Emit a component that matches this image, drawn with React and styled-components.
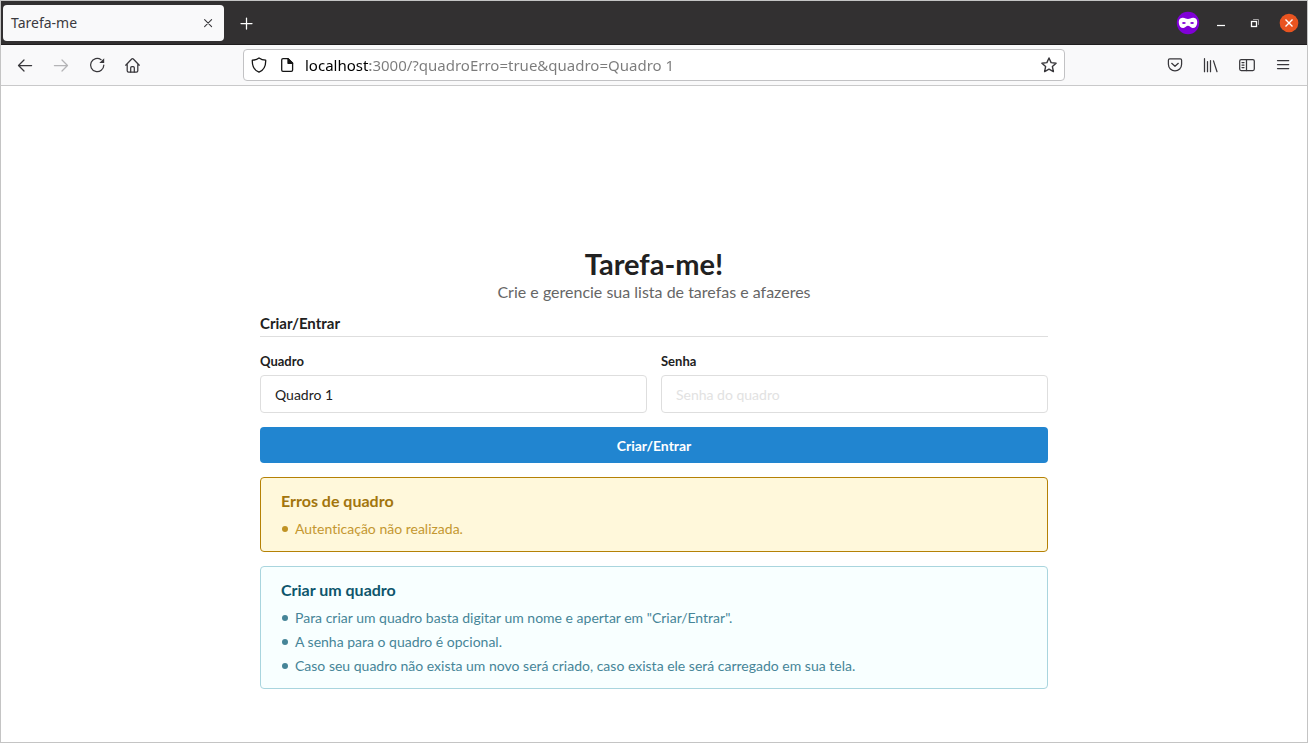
import React, { useState } from "react";
import styled, { createGlobalStyle } from "styled-components";

const GlobalStyle = createGlobalStyle`
  *, *::before, *::after { box-sizing: border-box; }
  body {
    margin: 0;
    background: #fff;
    font-family: Lato, "Open Sans", sans-serif;
    font-size: 14px;
    font-variant-ligatures: none;
  }
`;

const uiFont = `"Noto Sans", "Open Sans", sans-serif`;

const BrowserWindow = styled.div`
  min-height: 100vh;
  display: flex;
  flex-direction: column;
  border: 1px solid #c4c4c4;
`;

const TabStrip = styled.header`
  display: flex;
  align-items: center;
  height: 44px;
  padding-left: 2px;
  background: #323031;
  border-bottom: 1px solid #1f1d1e;
`;

const Tab = styled.div`
  display: flex;
  align-items: center;
  justify-content: space-between;
  width: 221px;
  height: 36px;
  padding: 0 8px;
  border-radius: 4px;
  background: #f9f9fa;
  color: #3b3a3f;
  font: 14px/20px ${uiFont};
`;

const IconButton = styled.button`
  display: inline-flex;
  align-items: center;
  justify-content: center;
  flex: none;
  width: ${(p) => p.$size || 32}px;
  height: ${(p) => p.$size || 32}px;
  padding: 0;
  border: 0;
  border-radius: 4px;
  background: none;
  color: ${(p) => p.$color || "#38373b"};
`;

const NewTab = styled(IconButton)`
  margin-left: 6px;
`;

const WindowControls = styled.div`
  display: flex;
  align-items: center;
  margin-left: auto;
`;

const PrivateBadge = styled.svg`
  margin-right: 3px;
`;

const Toolbar = styled.nav`
  display: grid;
  grid-template-columns: minmax(140px, 1fr) minmax(0, 822px) minmax(140px, 1fr);
  align-items: center;
  height: 41px;
  padding: 0 8px;
  background: #f9f9fa;
  border-bottom: 1px solid #c9c9ca;
`;

const ToolGroup = styled.div`
  display: flex;
  gap: 4px;
  justify-content: ${(p) => (p.$end ? "flex-end" : "flex-start")};
`;

const UrlBar = styled.form`
  display: flex;
  align-items: center;
  height: 32px;
  padding: 0 1px;
  border: 1px solid #c2c2c4;
  border-radius: 4px;
  background: #fff;
`;

const UrlInput = styled.input`
  flex: 1;
  min-width: 0;
  height: 28px;
  margin-left: 4px;
  padding: 0;
  border: 0;
  outline: 0;
  font: 15px/20px ${uiFont};
  color: transparent;
  caret-color: #000;
  background: linear-gradient(90deg, #000 65px, #7b7b7b 65px);
  background-clip: text;
  -webkit-background-clip: text;
`;

const Page = styled.main`
  flex: 1;
  width: 100%;
  max-width: 816px;
  margin: 0 auto;
  padding: 160px 14px 52px;
  color: #212121;
`;

const Title = styled.h1`
  margin: 0;
  font-size: 29px;
  line-height: 36px;
  font-weight: 700;
  text-align: center;
`;

const Subtitle = styled.p`
  margin: 0 0 11px;
  font-size: 16px;
  line-height: 20px;
  text-align: center;
  color: #666;
`;

const BoardForm = styled.form`
  display: flex;
  flex-direction: column;
  gap: 14px;
  margin-bottom: 14px;
`;

const SectionTitle = styled.h2`
  margin: 0;
  padding-bottom: 3px;
  border-bottom: 1px solid #dedede;
  font-size: 15px;
  line-height: 20px;
`;

const Fields = styled.div`
  display: grid;
  grid-template-columns: 1fr 1fr;
  gap: 14px;
`;

const Field = styled.label`
  display: flex;
  flex-direction: column;
  gap: 4px;
  font-size: 13px;
  line-height: 20px;
  font-weight: 700;
`;

const TextInput = styled.input`
  width: 100%;
  height: 38px;
  padding: 0 14px;
  border: 1px solid #dedede;
  border-radius: 4px;
  outline: 0;
  background: #fff;
  color: #212121;
  font: 14px/18px Lato, sans-serif;
  &::placeholder { color: #e2e2e2; opacity: 1; }
`;

const Submit = styled.button`
  height: 36px;
  padding: 2px 20px 0;
  border: 0;
  border-radius: 4px;
  background: #2185d0;
  color: #fff;
  font: 700 14px/20px Lato, sans-serif;
`;

const tones = {
  warning: { bg: "#fff8db", border: "#b58105", title: "#a2750d", text: "#c49730", dot: "#c09325" },
  info: { bg: "#f8ffff", border: "#a9d5de", title: "#0e566c", text: "#468598", dot: "#468598" },
};

const Message = styled.section`
  padding: 13px 20px 10px;
  border: 1px solid ${(p) => tones[p.$tone].border};
  border-radius: 4px;
  background: ${(p) => tones[p.$tone].bg};
  color: ${(p) => tones[p.$tone].text};
  & + & { margin-top: 14px; }
`;

const MessageTitle = styled.h3`
  margin: 0 0 6px;
  font-size: 16px;
  line-height: 20px;
  color: ${(p) => tones[p.$tone].title};
`;

const MessageList = styled.ul`
  margin: 0;
  padding: 0;
  list-style: none;
`;

const MessageItem = styled.li`
  display: flex;
  align-items: center;
  gap: 7px;
  line-height: 24px;
  &::before {
    content: "";
    flex: none;
    width: 6px;
    height: 6px;
    margin-left: 1px;
    border-radius: 50%;
    background: ${(p) => tones[p.$tone].dot};
  }
`;

const Glyph = ({ children, size = 16, w = 1.25 }) => (
  <svg width={size} height={size} viewBox={`0 0 ${size} ${size}`} fill="none" stroke="currentColor"
    strokeWidth={w} strokeLinecap="round" strokeLinejoin="round" aria-hidden="true">
    {children}
  </svg>
);

const BackIcon = () => <Glyph><path d="M14.6 8.5H1.8M7 3 1.5 8.5 7 14" /></Glyph>;
const ForwardIcon = () => <Glyph><path d="M1.4 8.5h12.8M9 3l5.5 5.5L9 14" /></Glyph>;
const ReloadIcon = () => (
  <Glyph>
    <path d="M14.8 8.2A6.6 6.6 0 1 1 12.1 2.7" />
    <path d="M15.2 1.2v4.900h-4.900z" fill="currentColor" stroke="none" />
  </Glyph>
);
const HomeIcon = () => (
  <Glyph>
    <path d="M.7 8.2 6.700 2a1.100 1.100 0 0 1 1.600 0l6 6.200M2.200 7v6.700c0 .9.5 1.400 1.400 1.400h7.800c.9 0 1.400-.5 1.400-1.400V7" />
    <path d="M5.700 15v-4.200c0-.7.4-1.100 1.100-1.100h1.400c.7 0 1.100.4 1.100 1.100V15" />
  </Glyph>
);
const ShieldIcon = () => (
  <Glyph w={1.3}><path d="M8 .9c2 1.500 4.100 2.200 6.700 2.300.2 5.600-1.900 10.100-6.700 12C3.200 13.300 1.100 8.800 1.300 3.200 3.900 3.100 6 2.400 8 .9z" /></Glyph>
);
const PageIcon = () => (
  <Glyph w={1.3}>
    <path d="M9 1.700H4c-.8 0-1.300.5-1.300 1.300v10c0 .8.5 1.300 1.300 1.300h8.300c.8 0 1.300-.5 1.300-1.300V6.300z" />
    <path d="M9 1.700v4.600h4.600z" fill="currentColor" />
  </Glyph>
);
const StarIcon = () => (
  <Glyph w={1.4}><path d="M8 1l2.100 4.600 5 .6-3.700 3.400 1 5L8 12.100l-4.400 2.500 1-5L.9 6.200l5-.6z" /></Glyph>
);
const PocketIcon = () => (
  <Glyph>
    <path d="M2.700 1.900h10.600c.8 0 1.300.5 1.300 1.300v4.100a6.600 6.600 0 0 1-13.200 0V3.200c0-.8.5-1.300 1.300-1.300z" />
    <path d="m4.700 6.300 3.300 3 3.300-3" />
  </Glyph>
);
const LibraryIcon = () => <Glyph><path d="M1.500 1.700v13M4.500 4.500v10.200M7.500 3.500v11.200M10.500 3.900l3.500 10.800" /></Glyph>;
const SidebarIcon = () => (
  <Glyph>
    <rect x=".7" y="2.500" width="14.600" height="11" rx="1.500" />
    <path d="M7.500 2.500v11M3 5.500h2M3 8h2M3 10.500h2" />
  </Glyph>
);
const MenuIcon = () => <Glyph><path d="M2.500 3.500h11.200M2.500 7.500h11.200M2.500 11.500h11.200" /></Glyph>;
const CrossIcon = () => <Glyph w={1.1}><path d="m4.600 4.600 7 7m0-7-7 7" /></Glyph>;
const PlusIcon = () => <Glyph><path d="M8.500 3v11M3 8.500h11" /></Glyph>;

const MaskIcon = () => (
  <PrivateBadge width="24" height="24" viewBox="0 0 24 24" role="img" aria-label="Navegação privativa">
    <circle cx="12" cy="12" r="11.200" fill="#8000d7" />
    <path fill="#fff" fillRule="evenodd" d="M6.500 6.800c2.300-.2 3.800 1.300 5.500 1.300s3.200-1.500 5.500-1.300c2.800.2 4 2.300 3.700 5.100-.3 3.100-2.100 5.300-4.600 5.100-2-.1-2.900-2.200-4.600-2.200s-2.600 2.100-4.600 2.200c-2.500.2-4.300-2-4.600-5.100-.3-2.800.9-4.900 3.700-5.100zM5.800 12c1.100 1.300 3.200 1.300 4.200-.1-1.100-1.400-3.200-1.300-4.200.1zm8.200-.1c1 1.400 3.100 1.400 4.200.1-1-1.400-3.100-1.500-4.200-.1z" />
  </PrivateBadge>
);
const MinimizeIcon = () => <Glyph><path d="M4 10.500h8" strokeLinecap="butt" /></Glyph>;
const RestoreIcon = () => (
  <Glyph w={1}>
    <path d="M6.500 4.500h5v5" stroke="#a5a3a4" />
    <rect x="4.500" y="6.500" width="5" height="5" strokeWidth="1.300" strokeLinejoin="miter" />
  </Glyph>
);
const CloseWindowIcon = () => (
  <svg width="20" height="20" viewBox="0 0 20 20" aria-hidden="true">
    <circle cx="10" cy="10" r="9.300" fill="#e95420" />
    <path d="m6.500 6.500 7 7m0-7-7 7" stroke="#fff" strokeWidth="1.400" />
  </svg>
);

const infoItems = [
  'Para criar um quadro basta digitar um nome e apertar em "Criar/Entrar".',
  "A senha para o quadro é opcional.",
  "Caso seu quadro não exista um novo será criado, caso exista ele será carregado em sua tela.",
];

function MessageBox({ tone, title, items }) {
  return (
    <Message $tone={tone}>
      <MessageTitle $tone={tone}>{title}</MessageTitle>
      <MessageList>
        {items.map((item) => <MessageItem $tone={tone} key={item}>{item}</MessageItem>)}
      </MessageList>
    </Message>
  );
}

export default function App() {
  const [url, setUrl] = useState("localhost:3000/?quadroErro=true&quadro=Quadro 1");
  const [board, setBoard] = useState("Quadro 1");
  const [password, setPassword] = useState("");
  const stay = (e) => e.preventDefault();

  return (
    <BrowserWindow>
      <GlobalStyle />
      <TabStrip>
        <Tab>
          Tarefa-me
          <IconButton $size={16} aria-label="Fechar aba"><CrossIcon /></IconButton>
        </Tab>
        <NewTab $color="#fff" aria-label="Nova aba"><PlusIcon /></NewTab>
        <WindowControls>
          <MaskIcon />
          <IconButton $size={36} $color="#fff" aria-label="Minimizar"><MinimizeIcon /></IconButton>
          <IconButton $size={32} $color="#fff" aria-label="Restaurar"><RestoreIcon /></IconButton>
          <IconButton $size={36} aria-label="Fechar janela"><CloseWindowIcon /></IconButton>
        </WindowControls>
      </TabStrip>
      <Toolbar>
        <ToolGroup>
          <IconButton aria-label="Voltar"><BackIcon /></IconButton>
          <IconButton $color="#b4b4b6" aria-label="Avançar"><ForwardIcon /></IconButton>
          <IconButton aria-label="Recarregar"><ReloadIcon /></IconButton>
          <IconButton aria-label="Página inicial"><HomeIcon /></IconButton>
        </ToolGroup>
        <UrlBar onSubmit={stay}>
          <IconButton type="button" $size={28} $color="#151515" aria-label="Proteção"><ShieldIcon /></IconButton>
          <IconButton type="button" $size={28} $color="#151515" aria-label="Informações do site"><PageIcon /></IconButton>
          <UrlInput aria-label="Endereço" value={url} onChange={(e) => setUrl(e.target.value)} />
          <IconButton type="button" $size={28} aria-label="Favoritar"><StarIcon /></IconButton>
        </UrlBar>
        <ToolGroup $end>
          <IconButton aria-label="Pocket"><PocketIcon /></IconButton>
          <IconButton aria-label="Biblioteca"><LibraryIcon /></IconButton>
          <IconButton aria-label="Painel lateral"><SidebarIcon /></IconButton>
          <IconButton aria-label="Menu"><MenuIcon /></IconButton>
        </ToolGroup>
      </Toolbar>
      <Page>
        <Title>Tarefa-me!</Title>
        <Subtitle>Crie e gerencie sua lista de tarefas e afazeres</Subtitle>
        <BoardForm onSubmit={stay}>
          <SectionTitle>Criar/Entrar</SectionTitle>
          <Fields>
            <Field>
              Quadro
              <TextInput value={board} onChange={(e) => setBoard(e.target.value)} />
            </Field>
            <Field>
              Senha
              <TextInput type="password" placeholder="Senha do quadro" value={password}
                onChange={(e) => setPassword(e.target.value)} />
            </Field>
          </Fields>
          <Submit>Criar/Entrar</Submit>
        </BoardForm>
        <MessageBox tone="warning" title="Erros de quadro" items={["Autenticação não realizada."]} />
        <MessageBox tone="info" title="Criar um quadro" items={infoItems} />
      </Page>
    </BrowserWindow>
  );
}
